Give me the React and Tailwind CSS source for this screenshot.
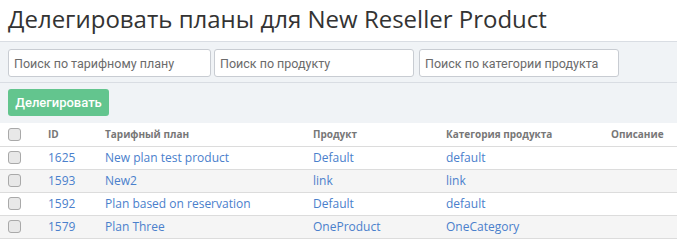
export default function App() {
  const rows = [
    { id: "1625", plan: "New plan test product", product: "Default", cat: "default" },
    { id: "1593", plan: "New2", product: "link", cat: "link" },
    { id: "1592", plan: "Plan based on reservation", product: "Default", cat: "default" },
    { id: "1579", plan: "Plan Three", product: "OneProduct", cat: "OneCategory" },
  ];
  const cb = (
    <span className="block w-[13px] h-[13px] rounded-[3px] border border-[#a9a9a9] bg-[#e8e8e8]" />
  );
  return (
    <div className="w-[677px] h-[241px] bg-white overflow-hidden" style={{ fontFamily: "'Open Sans', sans-serif" }}>
      <div className="h-[42px] px-[8px] pt-[2px] border-b border-[#d9dde3]">
        <h1 className="text-[24px] leading-[34px] text-[#333] font-normal">Делегировать планы для New Reseller Product</h1>
      </div>
      <div className="bg-[#f0f3f6]">
        <div className="flex gap-[3px] px-[8px] pt-[7px] pb-[5px] border-b border-[#d9dde3]" style={{ fontFamily: "Roboto, sans-serif" }}>
          {["Поиск по тарифному плану", "Поиск по продукту", "Поиск по категории продукта"].map((p, i) => (
            <input
              key={i}
              placeholder={p}
              className={`h-[28px] ${i === 0 ? "w-[203px]" : i === 1 ? "w-[200px] mr-[2px]" : "w-[200px]"} bg-white border border-[#c8ccd2] rounded-[3px] px-[5px] text-[12.5px] text-[#555] placeholder:text-[#6b6b6b] outline-none`}
            />
          ))}
        </div>
        <div className="px-[8px] pt-[6px] pb-[7px]">
          <button className="h-[27px] w-[101px] rounded-[3px] bg-[#63c58e] text-white text-[13px] font-medium" style={{ fontFamily: "Roboto, sans-serif" }}>
            Делегировать
          </button>
        </div>
      </div>
      <table className="w-full border-collapse text-[12px]">
        <thead>
          <tr className="h-[23px] border-b border-[#dcdcdc] text-[#777] text-[10px] font-bold text-left">
            <th className="w-[48px] pl-[8px]">{cb}</th>
            <th className="w-[57px] font-bold">ID</th>
            <th className="w-[208px] font-bold">Тарифный план</th>
            <th className="w-[133px] font-bold">Продукт</th>
            <th className="w-[165px] font-bold">Категория продукта</th>
            <th className="font-bold">Описание</th>
          </tr>
        </thead>
        <tbody>
          {rows.map((r, i) => (
            <tr key={r.id} className={`h-[23px] border-b border-[#dcdcdc] text-[#4a80cc] ${i % 2 ? "bg-[#f5f5f5]" : "bg-white"}`}>
              <td className="pl-[8px]">{cb}</td>
              <td>{r.id}</td>
              <td>{r.plan}</td>
              <td>{r.product}</td>
              <td>{r.cat}</td>
              <td></td>
            </tr>
          ))}
        </tbody>
      </table>
    </div>
  );
}
